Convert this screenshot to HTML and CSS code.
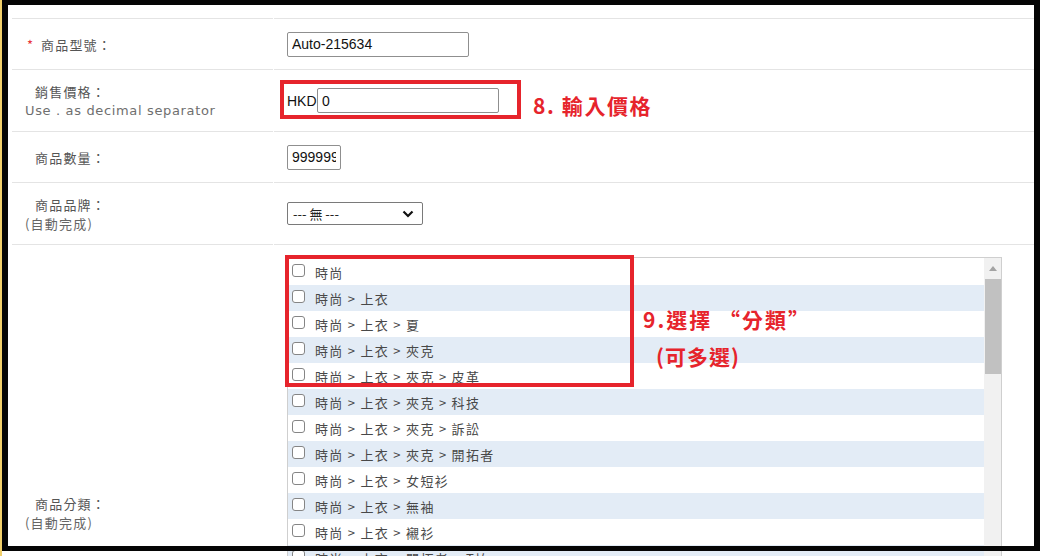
FILE: index.html
```html
<!DOCTYPE html>
<html lang="zh-Hant">
<head>
<meta charset="utf-8">
<title>商品資料</title>
<link rel="stylesheet" href="styles.css">
</head>
<body>
<div class="page">
  <div class="form">
    <div class="row row-first row-s">
      <div class="label"><div class="line"><span class="req">*</span><span class="lt req-lt">商品型號：</span></div></div>
      <div class="value"><input class="txt w182" type="text" value="Auto-215634"></div>
    </div>
    <div class="row row-l">
      <div class="label"><div class="line ind">銷售價格：</div><div class="hint">Use . as decimal separator</div></div>
      <div class="value"><span class="cur">HKD</span><input class="txt w182" type="text" value="0"></div>
    </div>
    <div class="row row-s">
      <div class="label"><div class="line ind">商品數量：</div></div>
      <div class="value"><input class="txt w54" type="text" value="999999"></div>
    </div>
    <div class="row row-l">
      <div class="label"><div class="line ind">商品品牌：</div><div class="sub">(自動完成)</div></div>
      <div class="value">
        <div class="select"><span>--- 無 ---</span>
          <svg class="chev" width="12" height="8" viewBox="0 0 12 8"><path d="M1.5 1.5 L6 6 L10.5 1.5" fill="none" stroke="#111" stroke-width="2.2"/></svg>
        </div>
      </div>
    </div>
    <div class="row row-list">
      <div class="label"><div class="line ind">商品分類：</div><div class="sub">(自動完成)</div></div>
      <div class="value value-top">
        <div class="listbox">
          <div class="items">
            <div class="item"><span class="cb"></span><span>時尚</span></div>
            <div class="item"><span class="cb"></span><span>時尚 &gt; 上衣</span></div>
            <div class="item"><span class="cb"></span><span>時尚 &gt; 上衣 &gt; 夏</span></div>
            <div class="item"><span class="cb"></span><span>時尚 &gt; 上衣 &gt; 夾克</span></div>
            <div class="item"><span class="cb"></span><span>時尚 &gt; 上衣 &gt; 夾克 &gt; 皮革</span></div>
            <div class="item"><span class="cb"></span><span>時尚 &gt; 上衣 &gt; 夾克 &gt; 科技</span></div>
            <div class="item"><span class="cb"></span><span>時尚 &gt; 上衣 &gt; 夾克 &gt; 訴訟</span></div>
            <div class="item"><span class="cb"></span><span>時尚 &gt; 上衣 &gt; 夾克 &gt; 開拓者</span></div>
            <div class="item"><span class="cb"></span><span>時尚 &gt; 上衣 &gt; 女短衫</span></div>
            <div class="item"><span class="cb"></span><span>時尚 &gt; 上衣 &gt; 無袖</span></div>
            <div class="item"><span class="cb"></span><span>時尚 &gt; 上衣 &gt; 襯衫</span></div>
            <div class="item"><span class="cb"></span><span>時尚 &gt; 上衣 &gt; 開拓者 &gt; T恤</span></div>
          </div>
          <div class="sbar">
            <div class="sb-up"><svg width="8" height="5" viewBox="0 0 8 5"><path d="M0 5 L4 0 L8 5 Z" fill="#a3a3a3"/></svg></div>
            <div class="sb-thumb"></div>
          </div>
        </div>
      </div>
    </div>
  </div>

  <div class="rbox rbox1"></div>
  <div class="note note1">8. 輸入價格</div>
  <div class="rbox rbox2"></div>
  <div class="note note2"><div class="n2a">9.選擇 “分類”</div><div class="n2b">(可多選)</div></div>

  <div class="edge"></div>
  <div class="frame"></div>
</div>
</body>
</html>
```

FILE: styles.css
```css
html, body {
  margin: 0;
  padding: 0;
  height: 556px;
  overflow: hidden;
  background: #fff;
}
.page {
  position: relative;
  width: 1044px;
  height: 556px;
  overflow: hidden;
  font-family: "Noto Sans CJK TC", "Noto Sans", sans-serif;
}
.form {
  padding-top: 18px;
  margin-left: 12px;
  width: 1022px;
}
.row {
  display: flex;
  gap: 1px;
}
.label, .value {
  box-sizing: border-box;
  border-bottom: 1px solid #e4e4e4;
}
.row-first .label, .row-first .value {
  border-top: 1px solid #e4e4e4;
}
.row-s .label, .row-s .value { height: 51px; }
.row-first .label, .row-first .value { height: 52px; }
.row-l .label, .row-l .value { height: 62px; }
.row-list .label, .row-list .value { height: 536px; }

.label {
  width: 261px;
  padding-left: 13px;
  display: flex;
  flex-direction: column;
  justify-content: center;
  color: #555;
  font-size: 13px;
  letter-spacing: 1.2px;
  line-height: 19px;
}
.line { display: flex; align-items: center; }
.ind { padding-left: 10px; }
.req {
  color: #e8333a;
  font-size: 13px;
  width: 16px;
  padding-left: 2px;
  box-sizing: border-box;
}
.hint {
  font-family: "DejaVu Sans", sans-serif;
  letter-spacing: 0.65px;
  font-size: 13px;
  color: #6f6f6f;
}
.sub {
  color: #666;
}
.value {
  flex: 1;
  padding-left: 13px;
  display: flex;
  align-items: center;
}
.value-top {
  align-items: flex-start;
  padding-top: 12px;
}
.txt {
  box-sizing: border-box;
  height: 25px;
  margin: 0;
  border: 1px solid #8f8f8f;
  border-radius: 2px;
  padding: 0 4px;
  font-family: "Liberation Sans", Arial, sans-serif;
  font-size: 14px;
  color: #111;
  background: #fff;
  outline: none;
}
.w182 { width: 182px; }
.w54 { width: 54px; }
.cur {
  font-family: "Liberation Sans", Arial, sans-serif;
  font-size: 14px;
  color: #111;
  width: 30px;
}
.select {
  box-sizing: border-box;
  width: 136px;
  height: 23px;
  border: 1px solid #7a7a7a;
  border-radius: 2px;
  display: flex;
  align-items: center;
  justify-content: space-between;
  padding: 0 8px 0 5px;
  font-size: 13px;
  color: #222;
}
.listbox {
  box-sizing: border-box;
  width: 715px;
  height: 510px;
  border: 1px solid #cfcfcf;
  display: flex;
}
.items {
  flex: 1;
  padding-top: 1px;
}
.item {
  height: 26px;
  display: flex;
  align-items: center;
  padding-left: 4px;
  font-size: 13px;
  color: #484848;
  letter-spacing: 1.3px;
}
.item:nth-child(even) { background: #e3ecf6; }
.cb {
  box-sizing: border-box;
  width: 13px;
  height: 13px;
  border: 1px solid #858585;
  border-radius: 3px;
  background: #fff;
  margin-right: 10px;
  margin-bottom: 3px;
  flex: none;
}
.sbar {
  width: 17px;
  background: #f1f1f1;
  display: flex;
  flex-direction: column;
  align-items: center;
}
.sb-up {
  height: 21px;
  width: 17px;
  display: flex;
  align-items: center;
  justify-content: center;
}
.sb-thumb {
  width: 16px;
  height: 95px;
  background: #c1c1c1;
}

.rbox {
  position: absolute;
  box-sizing: border-box;
  border: 4px solid #e6242c;
}
.rbox1 { left: 280px; top: 80px; width: 241px; height: 39px; }
.rbox2 { left: 285px; top: 255px; width: 349px; height: 132px; }
.note {
  position: absolute;
  color: #e6242c;
  font-weight: 700;
  font-size: 21px;
  line-height: 24px;
  white-space: nowrap;
}
.note1 { left: 533px; top: 93px; letter-spacing: 1.6px; }
.note2 { left: 643px; top: 307px; }
.n2a { letter-spacing: 2px; }
.n2b { margin-top: 13px; padding-left: 13px; letter-spacing: 1px; }

.edge {
  position: absolute;
  left: 0; top: 0;
  width: 2px; height: 556px;
  background: #f1cf6a;
}
.frame {
  position: absolute;
  left: 2px; top: 0;
  width: 1038px; height: 551px;
  box-sizing: border-box;
  border-style: solid;
  border-color: #050505;
  border-width: 5px 6px 5px 6px;
}
```
